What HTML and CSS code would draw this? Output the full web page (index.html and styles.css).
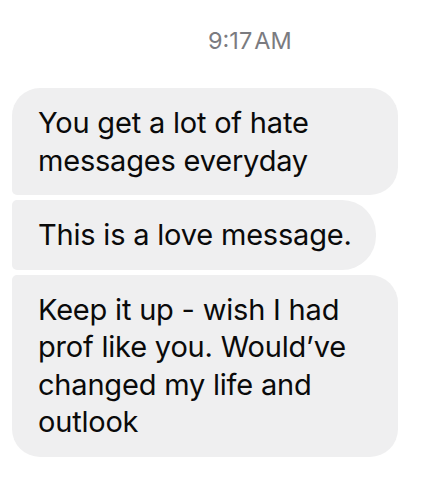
FILE: index.html
```html
<!DOCTYPE html>
<html>
<head>
<meta charset="utf-8">
<link rel="stylesheet" href="styles.css">
</head>
<body>
<div class="thread">
  <div class="stamp">9:17&#8202;AM</div>
  <div class="msgs">
    <div class="bubble first">You get a lot of hate messages everyday</div>
    <div class="bubble mid">This is a love message.</div>
    <div class="bubble last">Keep it up - wish I had prof like you. Would’ve changed my life and outlook</div>
  </div>
</div>
</body>
</html>
```
FILE: styles.css
```css
html, body {
  margin: 0;
  background: #ffffff;
}
.thread {
  width: 438px;
  height: 492px;
  font-family: Inter, "Noto Sans", sans-serif;
  display: flex;
  flex-direction: column;
}
.stamp {
  padding-left: 208px;
  margin-top: 26px;
  height: 30px;
  line-height: 30px;
  font-size: 23.5px;
  color: #7b7b80;
  letter-spacing: 0;
}
.msgs {
  margin-top: 32px;
  padding-left: 12px;
  display: flex;
  flex-direction: column;
  align-items: flex-start;
  gap: 5px;
}
.bubble {
  max-width: 386px;
  box-sizing: border-box;
  padding: 16px 24px 16px 26px;
  background: #efeff0;
  color: #0a0a0a;
  font-size: 29px;
  line-height: 37.5px;
  letter-spacing: -0.2px;
}
.first { border-radius: 28px 28px 28px 5px; width: 386px; }
.mid { border-radius: 5px 34px 34px 5px; }
.last { border-radius: 5px 28px 28px 28px; width: 386px; }
```
